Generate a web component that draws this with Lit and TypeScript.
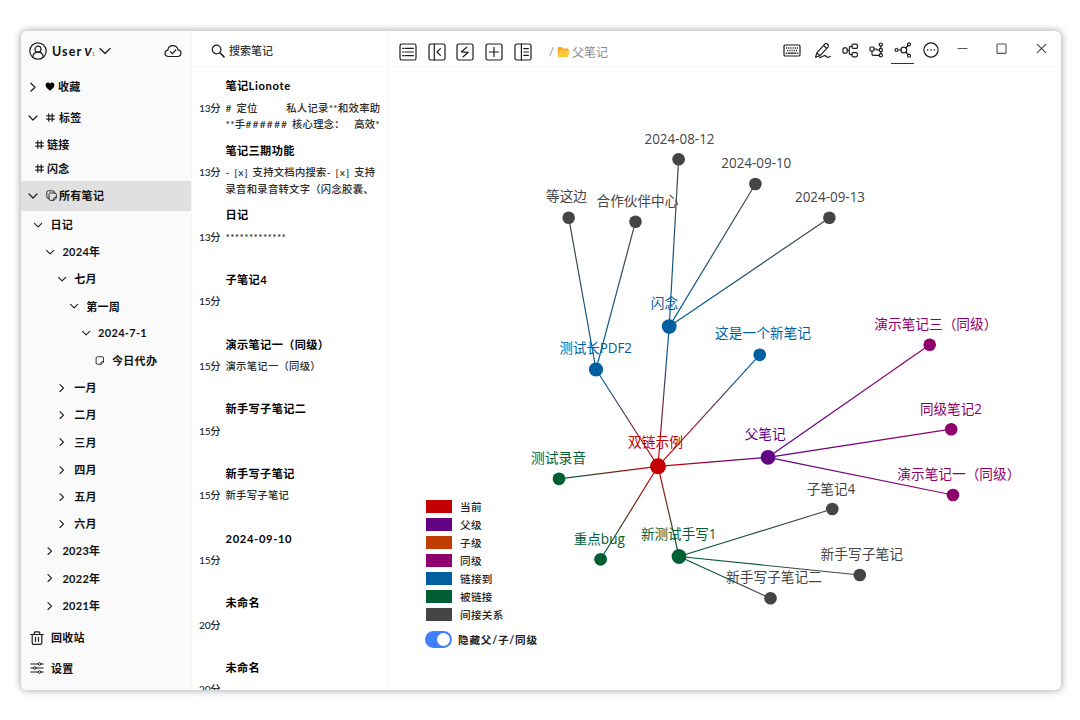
import { LitElement, html, svg, css } from 'lit'
import { customElement, property, state } from 'lit/decorators.js'
import { classMap } from 'lit/directives/class-map.js'

type Kind = 'current' | 'parent' | 'child' | 'sibling' | 'link' | 'linked' | 'indirect'

interface GraphNode {
  id: string
  label: string
  kind: Kind
  x: number
  y: number
  r: number
  // label box: left edge, vertical middle, width
  lx: number
  ly: number
  lw: number
}

interface TreeItem {
  label: string
  depth: number
  icon: 'nodeOpen' | 'nodeClosed' | 'note'
}

interface Note {
  title: string
  time: string
  lines: string[]
}

const COLORS: Record<Kind, string> = {
  current: '#c40000',
  parent: '#620084',
  child: '#c03c00',
  sibling: '#90006c',
  link: '#005f9e',
  linked: '#005e35',
  indirect: '#454545',
}

const LEGEND: [Kind, string][] = [
  ['current', '当前'],
  ['parent', '父级'],
  ['child', '子级'],
  ['sibling', '同级'],
  ['link', '链接到'],
  ['linked', '被链接'],
  ['indirect', '间接关系'],
]

const NODES: GraphNode[] = [
  { id: 'd0812', label: '2024-08-12', kind: 'indirect', x: 678.6, y: 159.3, r: 6.3, lx: 644.5, ly: 139.5, lw: 70 },
  { id: 'd0910', label: '2024-09-10', kind: 'indirect', x: 755.4, y: 184, r: 6.3, lx: 721.3, ly: 164, lw: 70 },
  { id: 'd0913', label: '2024-09-13', kind: 'indirect', x: 829.4, y: 217.7, r: 6.3, lx: 795, ly: 197.7, lw: 70 },
  { id: 'side', label: '等这边', kind: 'indirect', x: 568.7, y: 217.7, r: 6.3, lx: 546, ly: 197, lw: 41 },
  { id: 'partner', label: '合作伙伴中心', kind: 'indirect', x: 635.5, y: 221.7, r: 6.3, lx: 596.5, ly: 201.5, lw: 81.8 },
  { id: 'flash', label: '闪念', kind: 'link', x: 669.2, y: 326.6, r: 7.4, lx: 650.8, ly: 304, lw: 27.4 },
  { id: 'pdf', label: '测试长PDF2', kind: 'link', x: 596, y: 369.5, r: 7.1, lx: 559.5, ly: 348.3, lw: 72.5 },
  { id: 'new', label: '这是一个新笔记', kind: 'link', x: 759.7, y: 354.8, r: 6.4, lx: 715, ly: 334, lw: 96 },
  { id: 'root', label: '双链示例', kind: 'current', x: 658, y: 466.3, r: 8, lx: 628, ly: 442.5, lw: 55 },
  { id: 'father', label: '父笔记', kind: 'parent', x: 768, y: 457.3, r: 7.4, lx: 744.7, ly: 434.5, lw: 41 },
  { id: 'audio', label: '测试录音', kind: 'linked', x: 559, y: 478.8, r: 6.4, lx: 531, ly: 458.7, lw: 55 },
  { id: 'bug', label: '重点bug', kind: 'linked', x: 600.6, y: 559.3, r: 6.4, lx: 573.8, ly: 540, lw: 51 },
  { id: 'hand', label: '新测试手写1', kind: 'linked', x: 679, y: 556.5, r: 7.4, lx: 641, ly: 534.5, lw: 75.5 },
  { id: 'sub4', label: '子笔记4', kind: 'indirect', x: 832.3, y: 509, r: 6.3, lx: 806.8, ly: 489.5, lw: 48.5 },
  { id: 'sub', label: '新手写子笔记', kind: 'indirect', x: 859.8, y: 575, r: 6.3, lx: 820.5, ly: 554.5, lw: 82.5 },
  { id: 'sub2', label: '新手写子笔记二', kind: 'indirect', x: 770.5, y: 598.3, r: 6.3, lx: 726, ly: 577.5, lw: 96 },
  { id: 'demo3', label: '演示笔记三（同级）', kind: 'sibling', x: 929.7, y: 344.7, r: 6.3, lx: 874.3, ly: 324.5, lw: 123 },
  { id: 'same2', label: '同级笔记2', kind: 'sibling', x: 951.2, y: 429.2, r: 6.3, lx: 920, ly: 409.5, lw: 62 },
  { id: 'demo1', label: '演示笔记一（同级）', kind: 'sibling', x: 953, y: 495, r: 6.3, lx: 897.3, ly: 474.5, lw: 123 },
]

const EDGES: [string, string][] = [
  ['root', 'flash'], ['root', 'pdf'], ['root', 'new'], ['root', 'father'],
  ['root', 'audio'], ['root', 'bug'], ['root', 'hand'],
  ['flash', 'd0812'], ['flash', 'd0910'], ['flash', 'd0913'],
  ['pdf', 'side'], ['pdf', 'partner'],
  ['father', 'demo3'], ['father', 'same2'], ['father', 'demo1'],
  ['hand', 'sub4'], ['hand', 'sub'], ['hand', 'sub2'],
]

const TREE: TreeItem[] = [
  { label: '日记', depth: 0, icon: 'nodeOpen' },
  { label: '2024年', depth: 1, icon: 'nodeOpen' },
  { label: '七月', depth: 2, icon: 'nodeOpen' },
  { label: '第一周', depth: 3, icon: 'nodeOpen' },
  { label: '2024-7-1', depth: 4, icon: 'nodeOpen' },
  { label: '今日代办', depth: 5, icon: 'note' },
  { label: '一月', depth: 2, icon: 'nodeClosed' },
  { label: '二月', depth: 2, icon: 'nodeClosed' },
  { label: '三月', depth: 2, icon: 'nodeClosed' },
  { label: '四月', depth: 2, icon: 'nodeClosed' },
  { label: '五月', depth: 2, icon: 'nodeClosed' },
  { label: '六月', depth: 2, icon: 'nodeClosed' },
  { label: '2023年', depth: 1, icon: 'nodeClosed' },
  { label: '2022年', depth: 1, icon: 'nodeClosed' },
  { label: '2021年', depth: 1, icon: 'nodeClosed' },
]

const NOTES: Note[] = [
  { title: '笔记Lionote', time: '13分', lines: ['# 定位\u3000\u3000  私人记录**和效率助', '**手###### 核心理念：\u3000 高效*'] },
  { title: '笔记三期功能', time: '13分', lines: ['- [x] 支持文档内搜索- [x] 支持', '录音和录音转文字（闪念胶囊、'] },
  { title: '日记', time: '13分', lines: ['*************'] },
  { title: '子笔记4', time: '15分', lines: [] },
  { title: '演示笔记一（同级）', time: '15分', lines: ['演示笔记一（同级）'] },
  { title: '新手写子笔记二', time: '15分', lines: [] },
  { title: '新手写子笔记', time: '15分', lines: ['新手写子笔记'] },
  { title: '2024-09-10', time: '15分', lines: [] },
  { title: '未命名', time: '20分', lines: [] },
  { title: '未命名', time: '20分', lines: [] },
]

const ICONS = {
  open: { w: 10, h: 10, body: svg`<path d="M1 3l4 4 4-4"/>` },
  closed: { w: 10, h: 10, body: svg`<path d="M2.800 1.200L7 5.200l-4.200 4"/>` },
  nodeOpen: { w: 10, h: 10, body: svg`<path stroke-width="1.100" d="M1.500 3.400l3.600 3.400 3.600-3.400"/>` },
  nodeClosed: { w: 10, h: 10, body: svg`<path stroke-width="1.100" d="M3 1.700l3.500 3.400L3 8.500"/>` },
  user: { w: 18, h: 18, body: svg`<circle cx="9" cy="9" r="8.2"/><circle cx="9" cy="7.2" r="3"/><path d="M3.800 15c.3-3 2.400-4.800 5.200-4.800s4.900 1.800 5.200 4.800"/>` },
  userOpen: { w: 12, h: 8, body: svg`<path d="M1 1.500l5 5 5-5"/>` },
  cloud: { w: 18, h: 14, body: svg`<path d="M4.600 12.500C2.500 12.500 1 11.200 1 9.300c0-1.700 1.200-2.900 2.800-3.100C4.200 3.500 6.200 1.700 9 1.700c2.700 0 4.500 1.700 5 4.200 1.800.2 3 1.500 3 3.200 0 2-1.400 3.400-3.400 3.400z"/><path d="M6.300 7.600l2 2 3.400-3.600"/>` },
  heart: { w: 10, h: 9, body: svg`<path fill="#000" stroke="none" d="M5 8.800C2.500 6.900.6 5.300.6 3.100.6 1.500 1.700.5 2.900.5c.9 0 1.700.5 2.100 1.300C5.400 1 6.200.5 7.100.5c1.200 0 2.300 1 2.300 2.600 0 2.200-1.900 3.800-4.400 5.700z"/>` },
  hash: { w: 9, h: 9, body: svg`<path d="M2.800.8v7.400M6.200.8v7.400M.7 2.800h7.600M.7 6.200h7.600"/>` },
  copy: { w: 11, h: 11, body: svg`<path stroke-width=".9" d="M3 8.300H2.200C1.300 8.300.8 7.800.8 6.900V2.200C.8 1.300 1.300.8 2.200.8h4.700c.9 0 1.400.5 1.400 1.400V3"/><path stroke-width=".9" d="M7.600 10.300H4.300c-.8 0-1.300-.5-1.300-1.300V4.300C3 3.500 3.500 3 4.300 3H9c.8 0 1.300.5 1.300 1.300v3.300zM7.600 10.300V8.500c0-.6.300-.9.900-.9h1.800"/>` },
  note: { w: 12, h: 9, body: svg`<path stroke-width=".9" d="M8 8.200H4.300C3.500 8.200 3.100 7.800 3.100 7V2c0-.8.400-1.200 1.200-1.200h5c.8 0 1.200.4 1.200 1.200v3.700zM8 8.200V6.600c0-.6.300-.9.900-.9h1.600"/>` },
  trash: { w: 14, h: 14, body: svg`<path d="M.8 3.500h12.400M4.300 3.300V1.900c0-.6.400-1 1-1h3.400c.6 0 1 .4 1 1v1.400M2.200 3.700v8c0 1 .6 1.600 1.600 1.600h6.400c1 0 1.600-.6 1.600-1.600v-8M5.500 6.300v4.200M8.500 6.300v4.200"/>` },
  settings: { w: 14, h: 12, body: svg`<path stroke-width="1" d="M.8 2h7.400M10.800 2h2.400M.8 6h2.600M6 6h7.200M.8 10h7.400M10.800 10h2.400"/><circle stroke-width="1" cx="9.500" cy="2" r="1.300"/><circle stroke-width="1" cx="4.700" cy="6" r="1.300"/><circle stroke-width="1" cx="9.500" cy="10" r="1.300"/>` },
  search: { w: 14, h: 14, body: svg`<circle cx="5.600" cy="5.500" r="4.300"/><path stroke-width="1.500" d="M8.900 8.800l4.100 4.100"/>` },
  list: { w: 18, h: 18, body: svg`<rect x="1" y="1" width="16" height="16" rx="1.800"/><path d="M3.600 5.300h1M6 5.300h8.400M3.600 9h1M6 9h8.400M3.600 12.700h1M6 12.700h8.400"/>` },
  collapse: { w: 18, h: 18, body: svg`<rect x="1" y="1" width="16" height="16" rx="1.800"/><path d="M6.300 1v16M12.400 5.600L9 9l3.400 3.400"/>` },
  flash: { w: 18, h: 18, body: svg`<rect x="1" y="1" width="16" height="16" rx="1.800"/><path d="M10.800 4.200L5.400 8.800l7 .5-5.300 4.500"/>` },
  plus: { w: 18, h: 18, body: svg`<rect x="1" y="1" width="16" height="16" rx="1.800"/><path d="M9 4.400v9.200M4.400 9h9.200"/>` },
  panel: { w: 18, h: 18, body: svg`<rect x="1" y="1" width="16" height="16" rx="1.800"/><path d="M7.400 1v16M9.800 5.700h4.600M9.800 9h4.600M9.800 12.300h4.600"/>` },
  folder: { w: 13, h: 12, body: svg`<path fill="#f9a825" stroke="none" d="M.8 10.500V2c0-.6.400-1 1-1h2.900l1.300 1.500h4.500c.6 0 1 .4 1 1V5H3.400z"/><path fill="#ffc83d" stroke="none" d="M3.400 4.600h8.700c.6 0 .8.400.6.900l-1.500 5c-.2.500-.5.700-1 .7H1.500c-.5 0-.7-.3-.6-.7L2.600 5.200c.1-.4.400-.6.800-.6z"/>` },
  keyboard: { w: 18, h: 13, body: svg`<rect x="1" y="1" width="16" height="11" rx="1.200"/><path stroke-width="1.300" stroke-linecap="butt" stroke-dasharray="1.100 1.100" d="M3 4h12M4.100 6.500h10.500"/><path d="M3.200 9.200h.8M5.500 9.200h7M14 9.200h.8"/>` },
  pen: { w: 18, h: 17, body: svg`<path d="M2.800 10.900L11 1.900c.5-.6 1.200-.6 1.800-.1l1.300 1.200c.6.5.6 1.200.1 1.800L6 13.700l-4.400 1.500zM9.600 3.500l3.100 2.900M2.800 10.900L6 13.700"/><path d="M5.600 15.600c2.200.2 3.200-2 5.200-2 1.600 0 1.300 1.700 2.800 1.700 1.200 0 1.800-.4 2.700-1"/>` },
  mind: { w: 17, h: 15, body: svg`<rect x="1" y="4.900" width="4.200" height="5.200" rx="1.200"/><rect x="10" y="1.200" width="5.400" height="4.200" rx="1.200"/><rect x="10" y="9.600" width="5.400" height="4.200" rx="1.200"/><path d="M5.200 7.500h2M10 3.300H8.900c-1 0-1.600.6-1.600 1.600v5.200c0 1 .6 1.600 1.600 1.600H10"/>` },
  tree: { w: 15, h: 16, body: svg`<rect x="1" y="5" width="4" height="4" rx="1"/><circle cx="11.800" cy="2.600" r="1.600"/><circle cx="11.800" cy="8" r="1.600"/><circle cx="11.800" cy="13.300" r="1.600"/><path d="M5 7h2.700v1M10.200 8H7.700M11.800 4.200v2.200M11.800 9.600v2.100M3 9v3c0 .8.500 1.300 1.300 1.300h5.900"/>` },
  graph: { w: 18, h: 16, body: svg`<circle cx="2.500" cy="8" r="1.500"/><circle cx="9.800" cy="8" r="2.900"/><circle cx="15" cy="2.300" r="1.500"/><circle cx="15" cy="13.700" r="1.500"/><path d="M4 8h2.900M11.900 6l2.100-2.500M11.800 10.100l2.200 2.400"/>` },
  more: { w: 16, h: 16, body: svg`<circle cx="8" cy="8" r="7.100"/><path stroke-width="1.500" d="M4.600 8h.1M8 8h.1M11.300 8h.1"/>` },
  minimize: { w: 11, h: 11, body: svg`<path stroke="#555" stroke-width="1.100" d="M1 5.500h9"/>` },
  maximize: { w: 11, h: 11, body: svg`<rect stroke="#555" stroke-width="1.100" x="1" y="1" width="9" height="9.400" rx=".6"/>` },
  close: { w: 11, h: 11, body: svg`<path stroke="#444" stroke-width="1.100" d="M1.300 1.300l8.400 8.400M9.700 1.300L1.300 9.700"/>` },
}

type IconName = keyof typeof ICONS

@customElement('line-icon')
export class LineIcon extends LitElement {
  static styles = css`
    :host {
      display: inline-flex;
      flex: none;
    }

    svg {
      display: block;
      fill: none;
      stroke: #1c1c1c;
      stroke-width: 1.2;
      stroke-linecap: round;
      stroke-linejoin: round;
    }
  `

  @property() name: IconName = 'open'

  render() {
    const { w, h, body } = ICONS[this.name]
    return html`<svg width=${w} height=${h} viewBox="0 0 ${w} ${h}">${body}</svg>`
  }
}

@customElement('note-graph')
export class NoteGraph extends LitElement {
  static styles = css`
    :host {
      display: block;
      position: relative;
      overflow: hidden;
    }

    .canvas {
      display: block;
      width: 672px;
      height: 623px;
    }

    .canvas text {
      font-family: 'Open Sans', 'Noto Sans CJK SC', sans-serif;
      font-size: 13.6px;
    }

    .canvas line {
      stroke-width: 1.2;
    }

    .legend {
      position: absolute;
      left: 35.5px;
      bottom: 42px;
      font-size: 10.6px;
      letter-spacing: 0.3px;
      color: #222;
    }

    .entry {
      display: flex;
      align-items: center;
      gap: 8.5px;
      height: 17.93px;
      padding-left: 1px;
      font-weight: 500;
    }

    .swatch {
      width: 26px;
      height: 13px;
    }

    .toggle {
      display: flex;
      align-items: center;
      gap: 6.5px;
      margin-top: 7px;
      height: 18px;
      font-weight: 700;
      letter-spacing: 0.8px;
      cursor: pointer;
    }

    .track {
      display: flex;
      justify-content: flex-end;
      box-sizing: border-box;
      width: 27px;
      height: 17px;
      padding: 2px;
      border-radius: 9px;
      background: #4080ff;
    }

    .track.off {
      justify-content: flex-start;
      background: #c9cdd4;
    }

    .knob {
      width: 13px;
      height: 13px;
      border-radius: 50%;
      background: white;
    }
  `

  @state() private hideFamily = true

  private toggleFamily() {
    this.hideFamily = !this.hideFamily
  }

  private renderEdge([from, to]: [string, string], i: number) {
    const a = NODES.find(n => n.id === from)!
    const b = NODES.find(n => n.id === to)!
    return svg`
      <linearGradient id="edge${i}" gradientUnits="userSpaceOnUse" x1=${a.x} y1=${a.y} x2=${b.x} y2=${b.y}>
        <stop offset="0.1" stop-color=${COLORS[a.kind]} />
        <stop offset="0.9" stop-color=${COLORS[b.kind]} />
      </linearGradient>
      <line x1=${a.x} y1=${a.y} x2=${b.x} y2=${b.y} stroke="url(#edge${i})" />
    `
  }

  render() {
    return html`
      <svg class="canvas" viewBox="389 67 672 623">
        ${EDGES.map((e, i) => this.renderEdge(e, i))}
        ${NODES.map(n => svg`
          <circle cx=${n.x} cy=${n.y} r=${n.r} fill=${COLORS[n.kind]} />
          <text x=${n.lx} y=${n.ly + 4.4} textLength=${n.lw} lengthAdjust="spacingAndGlyphs" fill=${COLORS[n.kind]}>${n.label}</text>
        `)}
      </svg>
      <div class="legend">
        ${LEGEND.map(([kind, label]) => html`
          <div class="entry">
            <span class="swatch" style="background: ${COLORS[kind]}"></span>
            <span>${label}</span>
          </div>
        `)}
        <div class="toggle" @click=${this.toggleFamily}>
          <span class=${classMap({ track: true, off: !this.hideFamily })}><span class="knob"></span></span>
          <span>隐藏父/子/同级</span>
        </div>
      </div>
    `
  }
}

@customElement('app-root')
export class AppRoot extends LitElement {
  static styles = css`
    :host {
      display: block;
      box-sizing: border-box;
      width: 1080px;
      height: 720px;
      padding: 31px 19.5px 30px 21px;
      background: #fff;
      font-family: Lato, 'Noto Sans CJK SC', sans-serif;
      font-size: 11px;
      color: #111;
    }

    .window {
      display: grid;
      grid-template-columns: 170px 198px 1fr;
      height: 659px;
      border-radius: 6px;
      overflow: hidden;
      background: #fff;
      box-shadow: 0 0 7px 1px rgba(0, 0, 0, 0.32);
    }

    /* sidebar */
    .sidebar {
      background: #fafafa;
      font-weight: 700;
      letter-spacing: 0.3px;
      white-space: nowrap;
    }

    .account {
      display: flex;
      align-items: center;
      height: 40px;
      padding: 0 9px 0 8px;
      box-sizing: border-box;
    }

    .name {
      margin-left: 5px;
      font-size: 12.5px;
      letter-spacing: 1.1px;
    }

    .badge {
      width: 15px;
      margin-left: 2px;
      font-size: 11px;
      font-style: italic;
      font-weight: 900;
      letter-spacing: 0;
    }

    .badge small {
      font-size: 6px;
      font-weight: 400;
      font-style: normal;
      color: #777;
    }

    .sync {
      margin-left: auto;
    }

    .row {
      display: flex;
      align-items: center;
      box-sizing: border-box;
      height: 31px;
      padding-left: 7px;
    }

    .row span {
      padding-bottom: 1.5px;
    }

    .row .mark {
      margin: 0 3px 0 7px;
    }

    .row .mark.wide {
      margin: 0 4px 0 8px;
    }

    .tag {
      height: 23.75px;
      padding-left: 14px;
      gap: 3px;
    }

    .selected {
      height: 30.5px;
      background: #e0e0e0;
    }

    .row.selected .mark {
      margin: 0 2px 0 8px;
    }

    .node {
      height: 27.22px;
      gap: 7.5px;
      padding-left: calc(12px + var(--depth) * 11.9px);
    }

    .foot {
      padding-top: 3px;
    }

    .foot .row {
      height: 30.8px;
      gap: 7px;
      padding-left: 9px;
    }

    /* note list */
    .notes {
      display: flex;
      flex-direction: column;
      min-height: 0;
      border-left: 1px solid #f5f5f5;
      border-right: 1px solid #f5f5f5;
      overflow: hidden;
    }

    .search {
      display: flex;
      flex: none;
      align-items: center;
      gap: 4px;
      box-sizing: border-box;
      height: 36px;
      padding: 4px 0 0 19px;
      border-bottom: 1px solid #f5f5f5;
      font-weight: 500;
      color: #333;
    }

    .search span {
      padding-bottom: 1.5px;
    }

    .items {
      padding-top: 9px;
    }

    .item {
      display: grid;
      grid-template-columns: 26.5px 1fr;
      grid-template-rows: 19px 1fr;
      row-gap: 4.5px;
      height: 64.67px;
      padding-left: 7px;
      white-space: pre;
    }

    .title {
      grid-column: 2;
      font-size: 11.2px;
      font-weight: 700;
      letter-spacing: 0.35px;
      line-height: 19px;
      color: #000;
    }

    .title .latin {
      letter-spacing: 0.65px;
    }

    .time,
    .summary {
      font-size: 10.3px;
      font-weight: 500;
      letter-spacing: 0.3px;
      line-height: 16.6px;
      color: #2a2a2a;
    }

    .time {
      letter-spacing: -0.3px;
    }

    .summary .latin {
      letter-spacing: 1.15px;
    }

    /* main pane */
    .main {
      min-width: 0;
    }

    .bar {
      display: flex;
      justify-content: space-between;
      box-sizing: border-box;
      height: 36px;
      border-bottom: 1px solid #f5f5f5;
    }

    .tools {
      display: flex;
      align-items: center;
      gap: 10.9px;
      padding: 6px 0 0 9.7px;
    }

    .crumbs {
      display: flex;
      align-items: center;
      gap: 2.5px;
      margin-left: 5.5px;
      font-size: 12px;
      color: #8a8a8a;
    }

    .views {
      display: grid;
      grid-template-columns: 31.6px 31.2px 22.4px 29.6px 23.8px 32.4px 31.4px 46.8px 31.6px;
      align-items: center;
      justify-items: center;
      padding: 3px 3.7px 0 0;
    }

    .frame {
      padding-bottom: 4px;
    }

    .active {
      box-sizing: border-box;
      height: 24px;
      margin-top: 3px;
      padding: 2.5px 2.5px 0;
      border-bottom: 1px solid #333;
    }
  `

  @state() private selectedView: IconName = 'graph'

  private selectView(name: IconName) {
    this.selectedView = name
  }

  // latin runs get wider tracking than the CJK around them
  private track(text: string) {
    return text.split(/([ -)+-~]+)/).map((part, i) => i % 2 ? html`<span class="latin">${part}</span>` : part)
  }

  private renderSidebar() {
    return html`
      <nav class="sidebar">
        <div class="account">
          <line-icon name="user"></line-icon>
          <span class="name">User</span>
          <span class="badge">V<small>1</small></span>
          <line-icon name="userOpen"></line-icon>
          <line-icon class="sync" name="cloud"></line-icon>
        </div>
        <div class="row">
          <line-icon name="closed"></line-icon>
          <line-icon class="mark" name="heart"></line-icon>
          <span>收藏</span>
        </div>
        <div class="row">
          <line-icon name="open"></line-icon>
          <line-icon class="mark wide" name="hash"></line-icon>
          <span>标签</span>
        </div>
        ${['链接', '闪念'].map(tag => html`
          <div class="row tag"><line-icon name="hash"></line-icon><span>${tag}</span></div>
        `)}
        <div class="row selected">
          <line-icon name="open"></line-icon>
          <line-icon class="mark" name="copy"></line-icon>
          <span>所有笔记</span>
        </div>
        ${TREE.map(item => html`
          <div class="row node" style="--depth: ${item.depth}">
            <line-icon name=${item.icon}></line-icon>
            <span>${item.label}</span>
          </div>
        `)}
        <div class="foot">
          <div class="row"><line-icon name="trash"></line-icon><span>回收站</span></div>
          <div class="row"><line-icon name="settings"></line-icon><span>设置</span></div>
        </div>
      </nav>
    `
  }

  private renderNotes() {
    return html`
      <section class="notes">
        <div class="search"><line-icon name="search"></line-icon><span>搜索笔记</span></div>
        <div class="items">
          ${NOTES.map(note => html`
            <div class="item"><div class="title">${this.track(note.title)}</div><div class="time">${note.time}</div><div class="summary">${note.lines.map(line => html`<div>${this.track(line)}</div>`)}</div></div>
          `)}
        </div>
      </section>
    `
  }

  private renderBar() {
    const tools: IconName[] = ['list', 'collapse', 'flash', 'plus', 'panel']
    const views: IconName[] = ['keyboard', 'pen', 'mind', 'tree', 'graph', 'more']
    const frame: IconName[] = ['minimize', 'maximize', 'close']

    return html`
      <header class="bar">
        <div class="tools">
          ${tools.map(name => html`<line-icon name=${name}></line-icon>`)}
          <div class="crumbs"><span>/</span><line-icon name="folder"></line-icon><span>父笔记</span></div>
        </div>
        <div class="views">
          ${views.map(name => html`
            <line-icon
              class=${classMap({ active: name === this.selectedView })}
              name=${name}
              @click=${() => this.selectView(name)}
            ></line-icon>
          `)}
          ${frame.map(name => html`<line-icon class="frame" name=${name}></line-icon>`)}
        </div>
      </header>
    `
  }

  render() {
    return html`
      <div class="window">
        ${this.renderSidebar()}
        ${this.renderNotes()}
        <main class="main">
          ${this.renderBar()}
          <note-graph></note-graph>
        </main>
      </div>
    `
  }
}
